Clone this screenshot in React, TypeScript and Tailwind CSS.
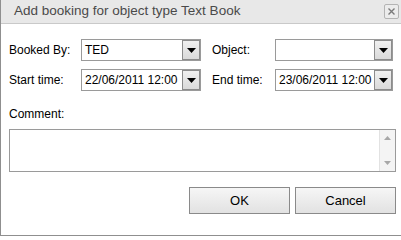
import React from "react";

const Arrow = () => (
  <svg width="9" height="5" viewBox="0 0 9 5">
    <path d="M0 0h9L4.5 5z" fill="#000" />
  </svg>
);

const Select = ({ value, w }: { value: string; w: string }) => (
  <div className={`${w} h-[22px] flex border border-[#9a9a9a] bg-white`}>
    <div className="flex-1 overflow-hidden whitespace-nowrap pl-[3px] leading-[20px] text-[12px] text-black">
      {value}
    </div>
    <div className="w-[18px] h-[20px] flex items-center justify-center bg-gradient-to-b from-[#f0f0f0] to-[#dadada] border border-[#8c8c8c]">
      <Arrow />
    </div>
  </div>
);

export default function App() {
  return (
    <div className="w-[401px] h-[236px] bg-white font-['Liberation_Sans',Arial,sans-serif] text-[12px] text-black overflow-hidden">
      <div className="h-[236px] flex flex-col border-l border-b border-[#8f8f8f]">
        <div className="h-[24px] shrink-0 flex items-center justify-between bg-[#e8e8e8] border-b border-[#c9c9c9] pl-[13px] pr-[2px]">
          <span className="text-[13.5px] text-[#4a4a4a]">Add booking for object type Text Book</span>
          <div className="w-[15px] h-[15px] flex items-center justify-center border border-[#b4b4b4] rounded-[2px] bg-[#ececec]">
            <svg width="7" height="7" viewBox="0 0 7 7">
              <path d="M0.5 0.5l6 6M6.5 0.5l-6 6" stroke="#7a7a7a" strokeWidth="1.4" />
            </svg>
          </div>
        </div>
        <div className="flex flex-col pl-[8px] pt-[15px]">
          <div className="flex items-center h-[22px]">
            <span className="w-[72px]">Booked By:</span>
            <Select value="TED" w="w-[120px]" />
            <span className="w-[63px] ml-[11px]">Object:</span>
            <Select value="" w="w-[118px]" />
          </div>
          <div className="flex items-center h-[22px] mt-[8px]">
            <span className="w-[72px]">Start time:</span>
            <Select value="22/06/2011 12:00" w="w-[120px]" />
            <span className="w-[63px] ml-[11px]">End time:</span>
            <Select value="23/06/2011 12:00" w="w-[118px]" />
          </div>
          <div className="mt-[16px] leading-[14px]">Comment:</div>
          <div className="mt-[8px] w-[387px] h-[43px] flex border border-[#9a9a9a]">
            <div className="flex-1" />
            <div className="w-[16px] flex flex-col items-center justify-between py-[6px] bg-[#f4f4f4] border-l border-[#e2e2e2]">
              <svg width="7" height="4" viewBox="0 0 7 4"><path d="M0 4h7L3.5 0z" fill="#a8a8a8" /></svg>
              <svg width="7" height="4" viewBox="0 0 7 4"><path d="M0 0h7L3.5 4z" fill="#a8a8a8" /></svg>
            </div>
          </div>
          <div className="flex justify-end gap-[5px] mt-[15px] pr-[5px]">
            <button className="w-[101px] h-[27px] border border-[#8a8a8a] bg-gradient-to-b from-[#f6f6f6] to-[#e2e2e2] text-[13px] text-black">OK</button>
            <button className="w-[101px] h-[27px] border border-[#8a8a8a] bg-gradient-to-b from-[#f6f6f6] to-[#e2e2e2] text-[13px] text-black">Cancel</button>
          </div>
        </div>
      </div>
    </div>
  );
}
